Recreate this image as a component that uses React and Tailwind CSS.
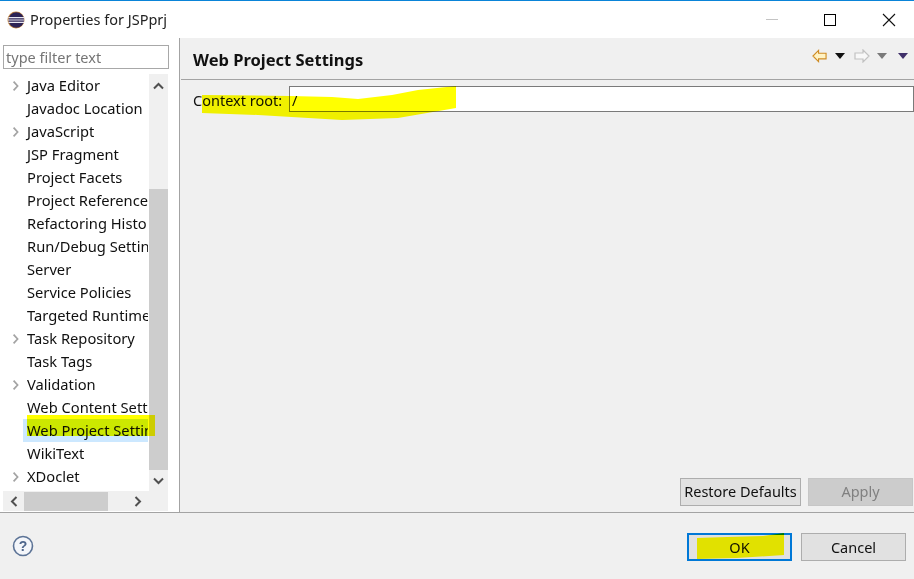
const font = { fontFamily: '"Noto Sans", "Open Sans", sans-serif' };

function Chevron() {
  return (
    <svg width="8" height="12" viewBox="0 0 8 12" className="shrink-0">
      <path d="M1.6 1.6 L5.6 6 L1.6 10.4" fill="none" stroke="#a3a3a3" strokeWidth="1.7" />
    </svg>
  );
}

const rows = [
  ["Java Editor", 1],
  ["Javadoc Location", 0],
  ["JavaScript", 1],
  ["JSP Fragment", 0],
  ["Project Facets", 0],
  ["Project References", 0],
  ["Refactoring History", 0],
  ["Run/Debug Settings", 0],
  ["Server", 0],
  ["Service Policies", 0],
  ["Targeted Runtimes", 0],
  ["Task Repository", 1],
  ["Task Tags", 0],
  ["Validation", 1],
  ["Web Content Settings", 0],
  ["Web Project Settings", 0, 1],
  ["WikiText", 0],
  ["XDoclet", 1],
];

function Tree() {
  return (
    <div className="w-[146px] h-[417px] overflow-hidden bg-white text-[14.7px]">
      {rows.map(([t, c, s]) => (
        <div key={t} className="h-[23px] flex items-center">
          <div className="w-[20px] shrink-0 flex justify-end pr-[3px]">{c ? <Chevron /> : null}</div>
          <div className={`h-[23px] w-[125px] pl-[4px] overflow-hidden whitespace-nowrap leading-[23px] text-[#101010] ${s ? "bg-[#cce8ff]" : ""}`}>{t}</div>
        </div>
      ))}
    </div>
  );
}

function VScroll() {
  return (
    <div className="w-[19px] h-[417px] bg-[#f0f0f0] flex flex-col">
      <div className="h-[115px] flex justify-center pt-[8px]">
        <svg width="11" height="8" viewBox="0 0 11 8"><path d="M1 6.5 L5.5 2 L10 6.5" fill="none" stroke="#505050" strokeWidth="2" /></svg>
      </div>
      <div className="h-[281px] bg-[#cdcdcd]" />
      <div className="flex-1 flex justify-center pt-[7px]">
        <svg width="11" height="8" viewBox="0 0 11 8"><path d="M1 1.5 L5.5 6 L10 1.5" fill="none" stroke="#505050" strokeWidth="2" /></svg>
      </div>
    </div>
  );
}

function HScroll() {
  return (
    <div className="ml-[3px] w-[165px] h-[20px] bg-[#f0f0f0] flex items-center">
      <div className="w-[21px] flex justify-center">
        <svg width="8" height="11" viewBox="0 0 8 11"><path d="M6.5 1 L2 5.5 L6.5 10" fill="none" stroke="#505050" strokeWidth="2" /></svg>
      </div>
      <div className="w-[84px] h-[19px] bg-[#cdcdcd]" />
      <div className="flex-1 flex justify-center">
        <svg width="8" height="11" viewBox="0 0 8 11"><path d="M1.5 1 L6 5.5 L1.5 10" fill="none" stroke="#505050" strokeWidth="2" /></svg>
      </div>
    </div>
  );
}

function Logo() {
  return (
    <svg width="18" height="18" viewBox="0 0 18 18">
      <circle cx="9" cy="9" r="8.5" fill="#c2843e" />
      <circle cx="9.3" cy="9" r="7.8" fill="#2c2255" />
      <path d="M1.4 6.6 H17 M1 9 H17.4 M1.4 11.4 H17" stroke="#e8e8f2" strokeWidth="1.2" />
    </svg>
  );
}

function Tri({ color }) {
  return (
    <svg width="10" height="6" viewBox="0 0 10 6"><path d="M0 0 H10 L5 6 Z" fill={color} /></svg>
  );
}

function Btn({ children, className }) {
  return (
    <div className={`h-[28px] flex items-center justify-center border-2 ${className}`}>{children}</div>
  );
}

function Marker({ className, viewBox, d }) {
  return (
    <svg className={`absolute mix-blend-multiply pointer-events-none ${className}`} viewBox={viewBox}>
      <path d={d} fill="#ffff00" />
    </svg>
  );
}

export default function App() {
  return (
    <div className="relative w-[914px] h-[579px] overflow-hidden flex flex-col bg-white text-[14.5px]" style={font}>
      <div className="h-px bg-[#0a84d8] shrink-0" />
      <div className="h-[37px] shrink-0 flex items-center bg-white">
        <div className="ml-[7px] mr-[5px] flex"><Logo /></div>
        <span className="text-[#222] text-[14.5px]">Properties for JSPprj</span>
        <div className="ml-auto flex items-center">
          <div className="w-[12px] h-px bg-[#c4c4c4] mr-[46px]" />
          <div className="w-[12px] h-[12px] border-[1.5px] border-black mr-[46px]" />
          <svg width="14" height="14" viewBox="0 0 14 14" className="mr-[18px]"><path d="M1 1 L13 13 M13 1 L1 13" stroke="#111" strokeWidth="1.1" /></svg>
        </div>
      </div>
      <div className="h-[474px] shrink-0 flex">
        <div className="w-[179px] shrink-0 bg-white flex flex-col">
          <div className="ml-[3px] mt-[7px] w-[166px] h-[24px] border border-[#a8a8a8] px-[2px] pt-px flex items-center text-[#757575] whitespace-nowrap overflow-hidden">type filter text</div>
          <div className="ml-[3px] mt-[5px] flex"><Tree /><VScroll /></div>
          <HScroll />
        </div>
        <div className="w-px shrink-0 bg-[#a3a3a3]" />
        <div className="flex-1 bg-[#f0f0f0] flex flex-col">
          <div className="h-[42px] shrink-0 ml-px border-b border-[#a3a3a3] flex items-start pl-[12px]">
            <span className="mt-[10px] font-bold text-[16.5px] text-[#111]">Web Project Settings</span>
            <div className="ml-auto mt-[11px] flex items-center">
              <svg width="15" height="14" viewBox="0 0 16 14"><path d="M7 1 L1 7 L7 13 V10 H15 V4 H7 Z" fill="#fff3c4" stroke="#cf8c24" strokeWidth="1.2" /></svg>
              <div className="ml-[8px] flex"><Tri color="#111" /></div>
              <svg width="16" height="14" viewBox="0 0 16 14" className="ml-[9px]"><path d="M9 1 L15 7 L9 13 V10 H1 V4 H9 Z" fill="#f8f8f8" stroke="#c2c2c2" strokeWidth="1.2" /></svg>
              <div className="ml-[7px] flex"><Tri color="#7a7a7a" /></div>
              <div className="ml-[11px] mr-[6px] flex"><Tri color="#40306a" /></div>
            </div>
          </div>
          <div className="flex items-start mt-[6px] pl-[13px]">
            <span className="text-[#111] leading-[28px] w-[96px] shrink-0">Context root:</span>
            <div className="flex-1 h-[26px] bg-white border border-[#7a7a7a] pl-[2px] leading-[26px] text-[#111]">/</div>
          </div>
          <div className="mt-auto flex justify-end gap-[7px] pb-[6px] pr-px">
            <Btn className="w-[121px] !border border-[#adadad] bg-[#e1e1e1] text-[#111]">Restore Defaults</Btn>
            <Btn className="w-[105px] !border border-[#c6c6c6] bg-[#cccccc] text-[#808080]">Apply</Btn>
          </div>
        </div>
      </div>
      <div className="h-px bg-[#a3a3a3] shrink-0" />
      <div className="flex-1 bg-[#f0f0f0] flex items-start">
        <svg width="22" height="22" viewBox="0 0 22 22" className="ml-[12px] mt-[22px]">
          <circle cx="11" cy="11" r="9.5" fill="#f4f6fa" stroke="#5c7396" strokeWidth="1.6" />
          <text x="11" y="16" textAnchor="middle" fontSize="14" fontWeight="700" fill="#4e668c" fontFamily="Liberation Sans">?</text>
        </svg>
        <div className="ml-auto mt-[20px] mr-[8px] flex gap-[9px]">
          <Btn className="w-[105px] border-[#0078d7] bg-[#e1e1e1] text-[#111] pt-px">OK</Btn>
          <Btn className="w-[105px] !border border-[#adadad] bg-[#e1e1e1] text-[#111] pt-px">Cancel</Btn>
        </div>
      </div>
      <Marker className="left-[202px] top-[85px] w-[254px] h-[36px]" viewBox="0 0 254 36"
        d="M0 10 L88 11 L130 12 L156 14 L190 10 L216 5 L254 1 V23 L196 33 L140 35 L56 30 L0 28 Z" />
      <Marker className="left-[27px] top-[415px] w-[128px] h-[22px]" viewBox="0 0 128 22"
        d="M0 0 H128 V21 H0 Z" />
      <Marker className="left-[697px] top-[533px] w-[87px] h-[27px]" viewBox="0 0 87 27"
        d="M0 5 L30 4 L66 3 L87 0 V22 L40 25 L0 26 Z" />
    </div>
  );
}
